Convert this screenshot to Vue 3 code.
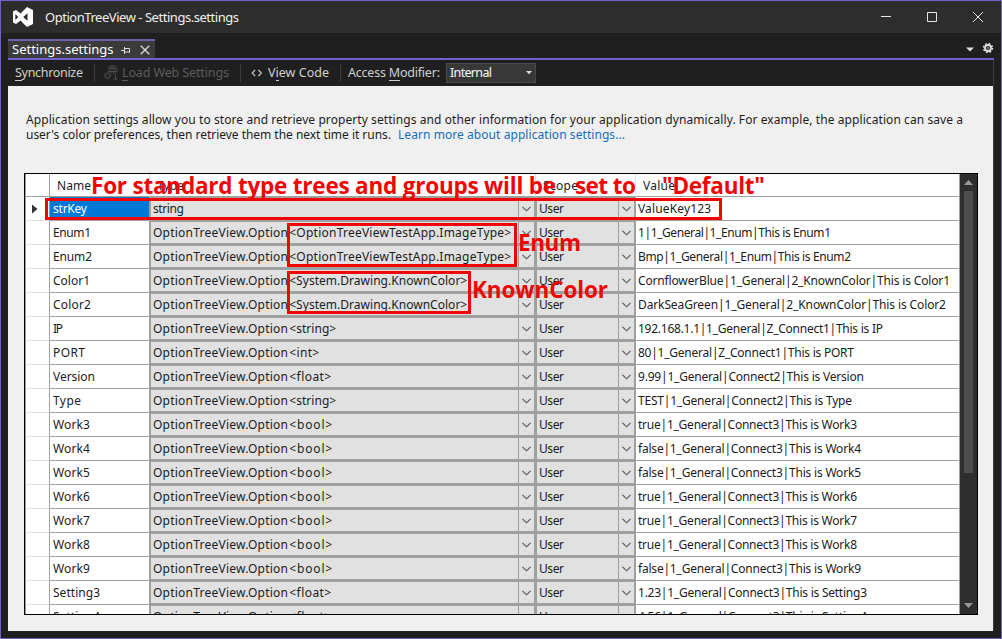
<script setup>
const rows = [
  ['strKey', 34, 'string', 31, '', 0, 'ValueKey123', 73],
  ['Enum1', 38, '', 0, '<OptionTreeViewTestApp.ImageType>', 222, '1|1_General|1_Enum|This is Enum1', 193],
  ['Enum2', 39, '', 0, '<OptionTreeViewTestApp.ImageType>', 222, 'Bmp|1_General|1_Enum|This is Enum2', 213],
  ['Color1', 37, '', 0, '<System.Drawing.KnownColor>', 178, 'CornflowerBlue|1_General|2_KnownColor|This is Color1', 312],
  ['Color2', 38, '', 0, '<System.Drawing.KnownColor>', 178, 'DarkSeaGreen|1_General|2_KnownColor|This is Color2', 308],
  ['IP', 10, '', 0, '<string>', 47, '192.168.1.1|1_General|Z_Connect1|This is IP', 245],
  ['PORT', 32, '', 0, '<int>', 30, '80|1_General|Z_Connect1|This is PORT', 216],
  ['Version', 42, '', 0, '<float>', 42, '9.99|1_General|Connect2|This is Version', 226],
  ['Type', 28, '', 0, '<string>', 47, 'TEST|1_General|Connect2|This is Type', 214],
  ['Work3', 37, '', 0, '<bool>', 43, 'true|1_General|Connect3|This is Work3', 219],
  ['Work4', 37, '', 0, '<bool>', 43, 'false|1_General|Connect3|This is Work4', 223],
  ['Work5', 37, '', 0, '<bool>', 43, 'false|1_General|Connect3|This is Work5', 223],
  ['Work6', 37, '', 0, '<bool>', 43, 'true|1_General|Connect3|This is Work6', 219],
  ['Work7', 37, '', 0, '<bool>', 43, 'true|1_General|Connect3|This is Work7', 219],
  ['Work8', 37, '', 0, '<bool>', 43, 'true|1_General|Connect3|This is Work8', 219],
  ['Work9', 37, '', 0, '<bool>', 43, 'false|1_General|Connect3|This is Work9', 223],
  ['Setting3', 47, '', 0, '<float>', 42, '1.23|1_General|Connect3|This is Setting3', 229],
  ['Setting4', 47, '', 0, '<float>', 42, '4.56|1_General|Connect3|This is Setting4', 229],
]

// Spreads the letters of a label so that it takes the given width.
const vFit = {
  mounted(el, { value }) {
    const natural = el.getBoundingClientRect().width
    const count = el.textContent.length
    if (count > 1) el.style.letterSpacing = `${(value - natural) / (count - 1)}px`
  },
}
</script>

<template>
  <div class="window">
    <header class="titlebar">
      <svg class="logo" width="22" height="22" viewBox="0 0 22 22">
        <path fill="#fff" fill-rule="evenodd" d="M15 1L21 4V18L15 21L8.500 14.500L4 18L1 16.500V5.500L4 4L8.500 7.500ZM3.300 8V14L6.300 11ZM15.500 7.300L11.200 11L15.500 14.700Z" />
      </svg>
      <span class="title"><span v-fit="194">OptionTreeView - Settings.settings</span></span>
      <svg class="controls" width="110" height="14" viewBox="0 0 110 14" fill="none" stroke="#e6e6e6">
        <path d="M1 6.500H11M47.500 2.500H56.500V11.500H47.500ZM93 2L103 12M103 2L93 12" />
      </svg>
    </header>

    <div class="tabs">
      <div class="tab">
        <span v-fit="100">Settings.settings</span>
        <svg class="pin" width="10" height="10" viewBox="0 0 10 10" fill="none" stroke="#ddd">
          <path d="M0 5.500H3.500M3.500 2V9M3.500 3.500H8.500V7.500M3.500 7H9" />
        </svg>
        <svg class="close" width="10" height="10" viewBox="0 0 10 10" stroke="#ddd" stroke-width="1.300">
          <path d="M.7.7L9.300 9.300M9.300.7L.7 9.300" />
        </svg>
      </div>
      <svg class="tabtools" width="29" height="12" viewBox="0 0 29 12">
        <path d="M1 5.500H9L5 9.500Z" fill="#e0e0e0" />
        <g transform="translate(23 6)" fill="none" stroke="#e0e0e0">
          <circle r="3" stroke-width="1.800" />
          <circle r="4.400" stroke-width="1.600" stroke-dasharray="1.730 1.730" />
          <circle r=".8" fill="#e0e0e0" stroke="none" />
        </g>
      </svg>
    </div>

    <div class="toolbar">
      <span class="tool sync"><span v-fit="68"><u>S</u>ynchronize</span></span>
      <i class="sep s1"></i>
      <svg class="web" width="16" height="16" viewBox="0 0 16 16" fill="none" stroke="#505050" stroke-width=".9">
        <path d="M5 4.500A4.500 4.500 0 1 1 11 9.300M5.500 3.500H13M5 6.500H13.500M9 1C7 3 7 5 8 8M9 1C12 4 11 7 10 9" />
        <circle cx="4.500" cy="10.500" r="2.200" />
        <circle cx="4.500" cy="10.500" r="3.400" stroke-dasharray="1.330 1.330" />
        <path d="M12.500 10V15M10.500 13L12.500 15L14.500 13" />
      </svg>
      <span class="tool load"><span v-fit="107"><u>L</u>oad Web Settings</span></span>
      <i class="sep s2"></i>
      <svg class="code" width="12" height="8" viewBox="0 0 12 8" fill="none" stroke="#ccc" stroke-width="1.200">
        <path d="M4.200.8L1.200 4L4.200 7.200M7.400.8L10.400 4L7.400 7.200" />
      </svg>
      <span class="tool view"><span v-fit="61">V<u>i</u>ew Code</span></span>
      <i class="sep s3"></i>
      <span class="tool access"><span v-fit="92">Access <u>M</u>odifier:</span></span>
      <div class="select">
        <span v-fit="42">Internal</span>
        <svg width="6" height="4" viewBox="0 0 6 4"><path d="M0 0H6L3 3.300Z" fill="#ddd" /></svg>
      </div>
    </div>

    <main class="page">
      <p class="intro">
        <span v-fit="937">Application settings allow you to store and retrieve property settings and other information for your application dynamically. For example, the application can save a</span><br>
        <span v-fit="365">user's color preferences, then retrieve them the next time it runs.</span>
        <a v-fit="227">Learn more about application settings...</a>
      </p>

      <div class="grid">
        <div class="cells">
          <div class="row head">
            <div class="marker"></div>
            <div class="name"><span v-fit="34">Name</span></div>
            <div class="type"><span v-fit="27">Type</span></div>
            <div class="scope"><span v-fit="35">Scope</span></div>
            <div class="value"><span v-fit="32">Value</span></div>
          </div>
          <div v-for="(r, i) in rows" :key="i" class="row">
            <div class="marker">
              <svg v-if="i === 0" width="6" height="10" viewBox="0 0 6 10"><path d="M0 .5L5.500 5L0 9.500Z" fill="#333" /></svg>
            </div>
            <div class="name" :class="{ selected: i === 0 }"><span v-fit="r[1]">{{ r[0] }}</span></div>
            <div class="type combo">
              <span v-if="r[2]" v-fit="r[3]">{{ r[2] }}</span>
              <template v-else><span v-fit="135">OptionTreeView.Option</span><span class="arg" v-fit="r[5]">{{ r[4] }}</span></template>
              <div class="drop"><svg width="9" height="6" viewBox="0 0 9 6"><path d="M.5.8L4.500 4.800L8.500.8" fill="none" stroke="#555" stroke-width="1.100" /></svg></div>
            </div>
            <div class="scope combo">
              <span v-fit="25">User</span>
              <div class="drop"><svg width="9" height="6" viewBox="0 0 9 6"><path d="M.5.8L4.500 4.800L8.500.8" fill="none" stroke="#555" stroke-width="1.100" /></svg></div>
            </div>
            <div class="value"><span v-fit="r[7]">{{ r[6] }}</span></div>
          </div>
        </div>
        <div class="scroll">
          <svg width="9" height="5" viewBox="0 0 9 5"><path d="M0 5L4.500 0L9 5Z" fill="#999" /></svg>
          <div class="thumb"></div>
          <svg width="9" height="5" viewBox="0 0 9 5"><path d="M0 0L4.500 5L9 0Z" fill="#999" /></svg>
        </div>
      </div>
    </main>

    <div class="box b1"></div>
    <div class="box b2"></div>
    <div class="box b3"></div>
    <span class="note n1" v-fit="465">For standard type trees and groups will be</span>
    <span class="note n2" v-fit="61">set to</span>
    <span class="note n3" v-fit="103">"Default"</span>
    <span class="note n4" v-fit="63">Enum</span>
    <span class="note n5" v-fit="136">KnownColor</span>
  </div>
</template>

<style>
html, body { margin: 0; overflow: hidden; background: #1f1f1f; }
</style>

<style scoped>
.window { position: relative; box-sizing: border-box; width: 1002px; height: 639px; border: 1px solid #7160c8; background: #1f1f1f; font-family: "Noto Sans", "Open Sans", sans-serif; font-size: 12px; overflow: hidden; }
.window * { box-sizing: border-box; }
span, a { white-space: pre; }
svg { display: block; flex: none; }
.titlebar { height: 32px; background: #2d2d2d; display: flex; align-items: center; padding-left: 11px; color: #f0f0f0; }
.title { margin-left: 11px; width: 800px; font-size: 13px; line-height: 20px; }
.controls { margin-left: 35px; }
.tabs { height: 27px; display: flex; align-items: flex-end; justify-content: space-between; margin: 0 7px; border-bottom: 2px solid #7160d0; }
.tab { width: 147px; height: 19px; border-top: 2px solid #7160b0; background: #3b3b3b; display: flex; align-items: center; color: #fff; font-size: 13px; line-height: 17px; padding-left: 4px; }
.tab span { width: 100px; }
.pin { margin-left: 9px; margin-top: 1px; }
.close { margin-left: 9px; margin-top: 1px; }
.tabtools { margin: 0 0 4px 0; }
.toolbar { height: 26px; margin: 0 7px; display: flex; align-items: center; color: #d0d0d0; font-size: 12.500px; line-height: 18px; border-right: 1px solid #3d3d3d; }
.toolbar u { text-decoration: none; box-shadow: 0 1px currentColor; display: inline-block; line-height: 15px; }
.sync { margin-left: 7px; width: 79px; }
.sep { width: 1px; height: 18px; background: #3d3d3d; flex: none; }
.web { margin-left: 8px; }
.load { margin-left: 3px; width: 118px; color: #5c5c5c; }
.code { margin-left: 10px; }
.view { margin-left: 5px; width: 72px; }
.access { margin-left: 7px; width: 98px; }
.select { width: 90px; height: 20px; background: #383838; border: 1px solid #4a4a4a; display: flex; align-items: center; justify-content: space-between; padding: 0 3px; color: #fafafa; flex: none; }
.page { margin: 0 7px; height: 545px; background: #f0f0f0; padding: 26px 16px 0; border-right: 1px solid #3d3d3d; }
.intro { margin: 0 0 0 2px; height: 61px; line-height: 15px; color: #1c1c1c; white-space: nowrap; }
.intro a { color: #1a6dbc; margin-left: 7px; }
.grid { width: 954px; height: 442px; border: 1px solid #000; display: flex; background: #fff; }
.cells { width: 935px; height: 440px; overflow: hidden; border-left: 1px solid #a0a0a0; color: #1c1c1c; }
.row { height: 24px; display: flex; line-height: 22px; }
.row > div { border-right: 1px solid #a0a0a0; border-bottom: 1px solid #a0a0a0; display: flex; align-items: center; flex: none; }
.row > .marker { width: 24px; border-bottom-color: #e0e0e0; padding-left: 6px; }
.name { width: 100px; padding-left: 3px; }
.name.selected { background: #0078d7; color: #fff; }
.row > .type { width: 386px; }
.row > .scope { width: 100px; }
.row > .value { width: 324px; padding-left: 2px; }
.row > .combo { border-right-width: 2px; border-bottom-width: 2px; border-top: 1px solid #a0a0a0; border-left: 1px solid #a0a0a0; background: #e1e1e1; padding-left: 2px; line-height: 20px; }
.arg { margin-left: 1px; }
.drop { margin-left: auto; width: 16px; height: 100%; border-left: 1px solid #a0a0a0; display: flex; align-items: center; justify-content: center; padding-right: 1px; }
.head { height: 23px; }
.row.head > div { border-right-color: #e0e0e0; border-bottom-color: #a0a0a0; padding-left: 7px; padding-top: 2px; }
.row.head > .marker, .row.head > .value { border-right-color: #a0a0a0; }
.scroll { width: 17px; background: #2e2e2e; display: flex; flex-direction: column; align-items: center; padding: 6px 0; margin-left: auto; }
.thumb { width: 9px; height: 282px; background: #4d4d4d; margin-top: 6px; margin-bottom: auto; }
.box { position: absolute; border: 3px solid #f00505; }
.b1 { left: 44px; top: 197px; width: 677px; height: 22px; }
.b2 { left: 286px; top: 222px; width: 230px; height: 44px; }
.b3 { left: 286px; top: 270px; width: 184px; height: 43px; }
.note { position: absolute; font: 700 22.500px/28px "Open Sans", "Noto Sans", sans-serif; color: #f00505; }
.n1 { left: 90px; top: 171px; }
.n2 { left: 574px; top: 171px; }
.n3 { left: 661px; top: 171px; }
.n4 { left: 517px; top: 228px; }
.n5 { left: 471px; top: 275px; }
</style>
